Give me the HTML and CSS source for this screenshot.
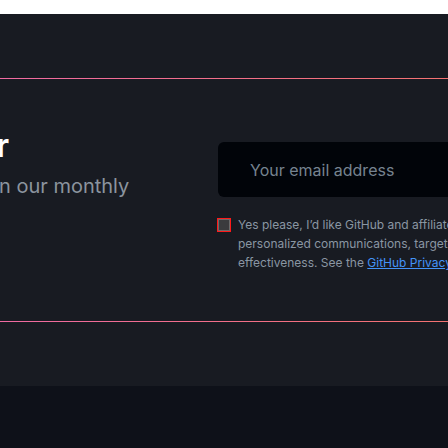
FILE: index.html
```html
<!DOCTYPE html>
<html lang="en">
<head>
<meta charset="utf-8">
<title>Newsletter</title>
<link rel="stylesheet" href="styles.css">
</head>
<body>
<div class="page">
  <div class="strip"></div>
  <section class="newsletter">
    <div class="rule"></div>
    <div class="inner">
      <div class="intro">
        <h2 class="title">r</h2>
        <p class="lead">n our monthly</p>
      </div>
      <form class="form">
        <input class="email" type="email" placeholder="Your email address">
        <label class="consent">
          <span class="box"></span>
          <span class="consent-text">Yes please, I’d like GitHub and affiliates to use my information for<br>personalized communications, targeted advertising and campaign<br>effectiveness. See the <a class="link" href="#">GitHub Privacy Statement</a> for more details.</span>
        </label>
      </form>
    </div>
    <div class="rule"></div>
    <div class="after"></div>
  </section>
  <footer class="footer"></footer>
</div>
</body>
</html>
```

FILE: styles.css
```css
html, body {
  margin: 0;
  padding: 0;
  background: #0e1119;
}
.page {
  width: 448px;
  height: 448px;
  overflow: hidden;
  font-family: Inter, "Noto Sans", sans-serif;
}
.strip {
  height: 14px;
  background: #ffffff;
}
.newsletter {
  background: #181b22;
  padding-top: 64px;
}
.rule {
  height: 1px;
  background: linear-gradient(90deg, #f06ba2, #f47271);
}
.inner {
  display: flex;
  height: 242px;
}
.intro {
  flex: none;
  width: 217px;
  padding-top: 47px;
}
.title {
  margin: 0 0 0 -4px;
  font-size: 32px;
  line-height: 40px;
  font-weight: 700;
  color: #ffffff;
}
.lead {
  margin: 6px 0 0 -1px;
  font-size: 20px;
  line-height: 28px;
  color: #8b949e;
  white-space: nowrap;
}
.form {
  flex: none;
  width: 320px;
  padding-top: 63px;
  margin: 0;
}
.email {
  display: block;
  box-sizing: border-box;
  width: 300px;
  height: 55px;
  margin: 0 0 0 1px;
  padding: 0 0 0 32px;
  border: none;
  border-radius: 6px;
  background: #010409;
  font-family: Inter, "Noto Sans", sans-serif;
  font-size: 16px;
  color: #e6edf3;
  outline: none;
}
.email::placeholder {
  color: #768390;
}
.consent {
  display: flex;
  align-items: flex-start;
  gap: 7px;
  margin-top: 18px;
}
.box {
  flex: none;
  box-sizing: border-box;
  width: 14px;
  height: 14px;
  margin-top: 3px;
  border: 1px solid #ff1a1a;
  background: #3b3b3d;
  box-shadow: inset 0 0 0 1px #6a6a6a;
}
.consent-text {
  font-size: 12px;
  line-height: 19px;
  color: #8a96a3;
  white-space: nowrap;
}
.link {
  color: #4493f8;
  text-decoration: underline;
}
.after {
  height: 64px;
}
.footer {
  height: 100px;
  background: #0e1119;
}
```
